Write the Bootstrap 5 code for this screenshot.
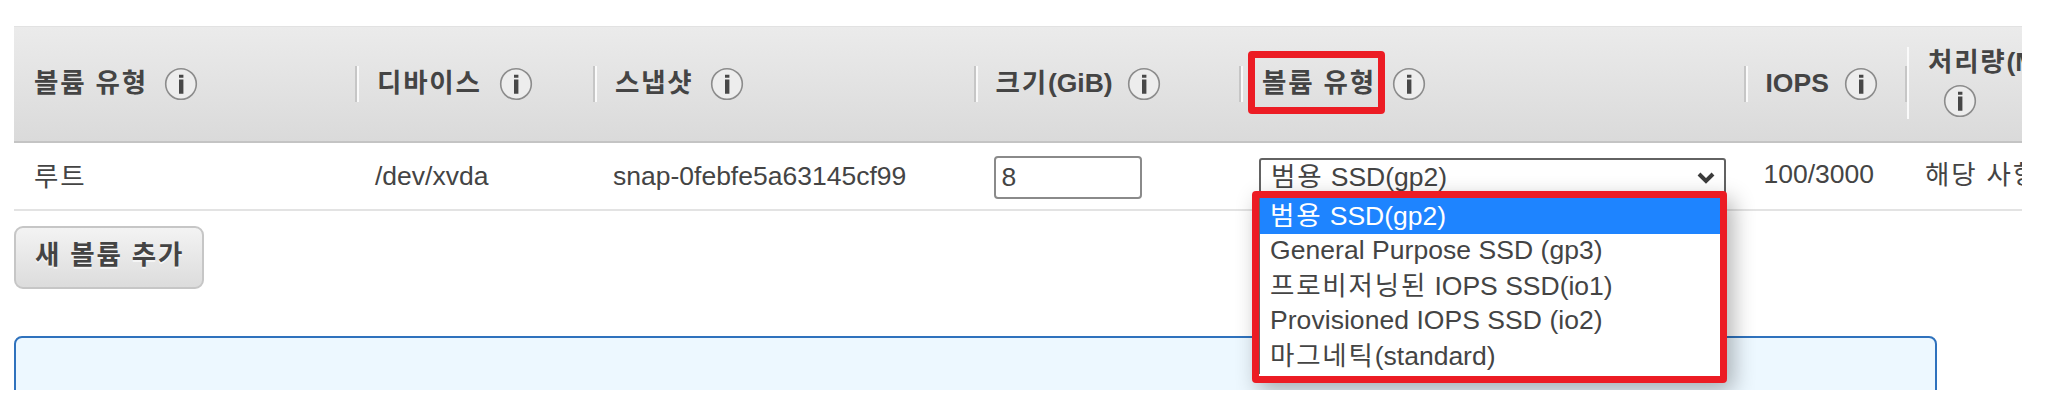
<!DOCTYPE html>
<html lang="ko">
<head>
<meta charset="utf-8">
<title>볼륨</title>
<link href="https://cdn.jsdelivr.net/npm/bootstrap@5.3.0/dist/css/bootstrap.min.css" rel="stylesheet">
<style>
body{font-family:"Liberation Sans","Noto Sans CJK KR",sans-serif;font-size:26.5px;line-height:36px;color:#444;background:#fff}
.page{width:2022px;height:390px;padding:26px 0 0 14px}
.vol-grid{display:grid;grid-template-columns:341px 238px 380.5px 265.5px 504.5px 161.5px 300px}
.vol-head{height:117px;width:2100px;background:linear-gradient(#ebebeb,#dadada);border-top:1px solid #e2e2e2;border-bottom:2px solid #c4c4c4;font-weight:700}
.vol-head span{padding-bottom:2px}
.vol-row{height:68px;width:2100px;border-bottom:2px solid #e3e3e3}
.cell{position:relative;padding-left:20px}
.sep::before{content:"";position:absolute;left:0;top:39px;width:2px;height:36px;background:#c6c6c6}
.sep::after{content:"";position:absolute;left:2px;top:39px;width:2px;height:36px;background:#fafafa}
.sep.tall::after{top:20px;height:72px}
.ko{letter-spacing:1.8px}
.info{width:34px;height:34px;flex:none}
.size-box{width:148px;height:43px;border:2px solid #8a8a8a;border-radius:4px;padding-left:6px;line-height:39px;background:#fff}
.type-box{width:467px;height:43px;border:2px solid #626262;border-radius:3px;padding-left:10px;line-height:34px}
.type-box svg{width:20px;height:14px;margin:11px 8px 0 0}
.marker{position:absolute;border:7px solid #ec1c24;border-radius:4px}
.marker-title{left:8.5px;top:24px;width:137.5px;height:63px}
.type-menu{position:absolute;left:13px;top:47.5px;width:475px;height:192px;z-index:5;border:7.5px solid #ec1c24;border-radius:4px;background:#fff;box-shadow:6px 8px 22px rgba(0,0,0,.3)}
.opt{padding-left:10px;height:37px;line-height:38px;border-left:1px solid #666;white-space:nowrap}
.opt.en{height:33px;line-height:32px;letter-spacing:.05px}
.opt.on{background:#1e84ff;color:#fff;height:36px;line-height:36px}
.add-btn{width:190px;height:63px;margin-top:15px;border:2px solid #c6c6c6;border-radius:9px;background:linear-gradient(#f3f3f3,#dcdcdc);font-size:26.5px;line-height:36px;font-weight:700;color:#444;padding:0 0 5px 19px;text-align:left;text-shadow:0 2px 0 #f5f5f5}
.note{width:1923px;height:90px;margin-top:47px;border:2px solid #2f72bd;border-radius:8px;background:#edf8ff}
</style>
</head>
<body>
<svg class="d-none"><symbol id="i" viewBox="0 0 34 34"><circle cx="17" cy="17" r="15.3" fill="#ededed" stroke="#8c8c8c" stroke-width="1.6"/><path d="M15 7.7h4.4v3H15zM15 12.5h4.4v14.3H15z" fill="#484848"/></symbol></svg>
<main class="page overflow-hidden">
  <div class="vol-grid vol-head text-nowrap align-items-stretch">
    <div class="cell d-flex align-items-center"><span class="ko">볼륨 유형</span><svg class="info" style="margin-left:16px"><use href="#i"/></svg></div>
    <div class="cell sep d-flex align-items-center"><span class="ko" style="margin-left:2px">디바이스</span><svg class="info" style="margin-left:17px"><use href="#i"/></svg></div>
    <div class="cell sep d-flex align-items-center"><span class="ko" style="margin-left:2px">스냅샷</span><svg class="info" style="margin-left:16px"><use href="#i"/></svg></div>
    <div class="cell sep d-flex align-items-center"><span style="margin-left:2px"><span class="ko">크기</span>(GiB)</span><svg class="info" style="margin-left:14px"><use href="#i"/></svg></div>
    <div class="cell sep d-flex align-items-center"><span class="ko" style="margin-left:3px">볼륨 유형</span><svg class="info" style="margin-left:16px"><use href="#i"/></svg><div class="marker marker-title"></div></div>
    <div class="cell sep d-flex align-items-center"><span style="margin-left:2px">IOPS</span><svg class="info" style="margin-left:15px"><use href="#i"/></svg></div>
    <div class="cell sep tall"><div style="margin:17px 0 0 3px"><span class="ko">처리량</span>(MB/초)</div><svg class="info d-block" style="margin:4px 0 0 18px"><use href="#i"/></svg></div>
  </div>
  <div class="vol-grid vol-row text-nowrap">
    <div class="cell pt-3"><span class="ko">루트</span></div>
    <div class="cell" style="padding-top:15px">/dev/xvda</div>
    <div class="cell" style="padding-top:15px">snap-0febfe5a63145cf99</div>
    <div class="cell" style="padding-top:12.5px"><div class="size-box">8</div></div>
    <div class="cell" style="padding-top:15px">
      <div class="type-box d-flex justify-content-between"><span><span class="ko">범용</span> SSD(gp2)</span>
        <svg viewBox="0 0 20 14"><path d="M3 3l7 7 7-7" fill="none" stroke="#3c3c3c" stroke-width="4"/></svg></div>
      <div class="type-menu">
        <div class="opt on"><span class="ko">범용</span> SSD(gp2)</div>
        <div class="opt en">General Purpose SSD (gp3)</div>
        <div class="opt"><span class="ko">프로비저닝된</span> IOPS SSD(io1)</div>
        <div class="opt en">Provisioned IOPS SSD (io2)</div>
        <div class="opt"><span class="ko">마그네틱</span>(standard)</div>
      </div>
    </div>
    <div class="cell" style="padding-top:13px">100/3000</div>
    <div class="cell" style="padding-top:14px"><span class="ko">해당 사항</span></div>
  </div>
  <button class="add-btn d-block" type="button"><span class="ko">새 볼륨 추가</span></button>
  <div class="note"></div>
</main>
<script src="https://cdn.jsdelivr.net/npm/bootstrap@5.3.0/dist/js/bootstrap.bundle.min.js"></script>
</body>
</html>
